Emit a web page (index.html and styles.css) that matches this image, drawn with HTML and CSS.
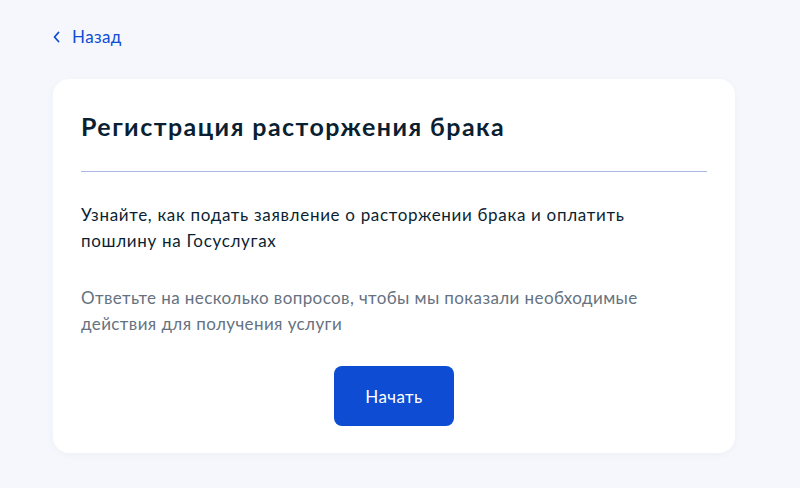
FILE: index.html
```html
<!DOCTYPE html>
<html lang="ru">
<head>
<meta charset="utf-8">
<link rel="stylesheet" href="styles.css">
</head>
<body>
<div class="page">
  <a class="back" href="#">
    <svg class="chev" width="8" height="12" viewBox="0 0 8 12"><path d="M5.5 1.5 L1.5 6 L5.5 10.5" fill="none" stroke="#0d4cd3" stroke-width="1.8" stroke-linecap="round" stroke-linejoin="round"/></svg>
    <span>Назад</span>
  </a>
  <div class="card">
    <h1 class="title">Регистрация расторжения брака</h1>
    <div class="divider"></div>
    <p class="lead">Узнайте, как подать заявление о расторжении брака и оплатить пошлину на Госуслугах</p>
    <p class="note">Ответьте на несколько вопросов, чтобы мы показали необходимые действия для получения услуги</p>
    <div class="actions"><button class="btn">Начать</button></div>
  </div>
</div>
</body>
</html>
```
FILE: styles.css
```css
html, body { margin: 0; padding: 0; }
body {
  background: #f5f7fc;
  font-family: Lato, "Noto Sans", sans-serif;
  color: #0b1f33;
  width: 800px;
  height: 488px;
  overflow: hidden;
}
.page { padding: 25px 0 0 53px; width: 682px; }
.back {
  display: inline-flex; align-items: center; gap: 11px;
  color: #0d4cd3; text-decoration: none; font-size: 17px; line-height: 24px;
  letter-spacing: 0.4px;
}
.chev { display: block; }
.card {
  margin-top: 30px;
  background: #fff;
  border-radius: 16px;
  padding: 28px 28px 27px;
  box-shadow: 0 2px 8px rgba(11,31,51,0.03);
}
.title {
  margin: 0; font-size: 25px; line-height: 36px; font-weight: 700; color: #0b1f33;
  letter-spacing: 1.45px;
  padding-top: 1px;
}
.divider { height: 1px; background: #aab6e4; margin: 27px 0 30px; }
.lead { margin: 0; max-width: 600px; font-size: 17px; line-height: 26px; color: #0b1f33; letter-spacing: 0.68px; }
.note { margin: 31px 0 0; font-size: 17px; line-height: 26px; color: #66727f; letter-spacing: 0.4px; }
.actions { display: flex; justify-content: center; margin-top: 29px; }
.btn {
  width: 120px; height: 60px; border: 0; border-radius: 8px;
  background: #0d4cd3; color: #fff; font-family: Lato, sans-serif; font-size: 17px;
  letter-spacing: 0.4px;
}
```
